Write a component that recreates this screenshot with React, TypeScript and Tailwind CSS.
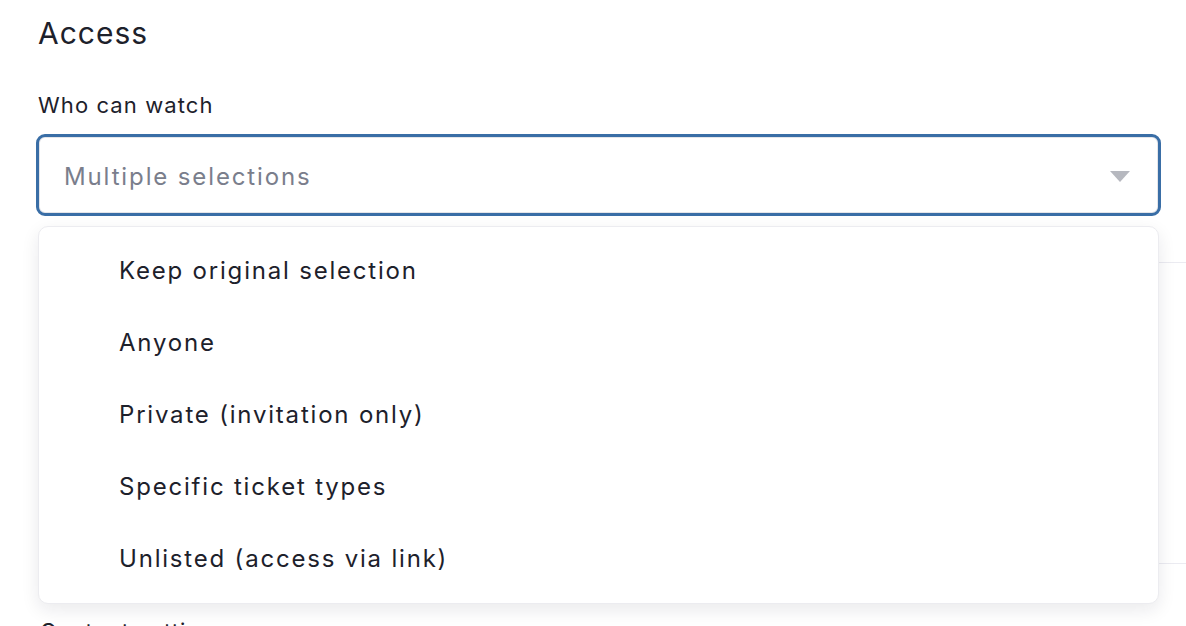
import { useState } from "react";

const OPTIONS = [
  "Keep original selection",
  "Anyone",
  "Private (invitation only)",
  "Specific ticket types",
  "Unlisted (access via link)",
];

function Caret() {
  return (
    <svg width="20" height="12" viewBox="0 0 20 12" className="shrink-0">
      <path d="M0 0 H20 L10 11 Z" fill="#b6b8bf" />
    </svg>
  );
}

export default function App() {
  const [open] = useState(true);

  return (
    <div
      className="relative h-[626px] w-[1186px] overflow-hidden bg-white text-[#1d212b]"
      style={{ fontFamily: "Inter, 'Noto Sans', sans-serif" }}
    >
      <div className="pl-[38px] pt-[15px]">
        <h2 className="text-[30px] leading-[36px] font-normal tracking-[0.033em]">Access</h2>
        <div className="mt-[40px] text-[22px] leading-[28px] tracking-[0.05em]">Who can watch</div>
      </div>

      <div className="relative ml-[36px] mt-[15px] w-[1125px]">
        <button className="flex h-[82px] w-full items-center justify-between rounded-[9px] border-[3px] border-[#3a6ea6] bg-white pl-[25px] pr-[28px] pt-[3px] shadow-[inset_0_0_0_1px_#e4e5e9]">
          <span className="text-[24px] tracking-[0.078em] text-[#7a7e8c]">Multiple selections</span>
          <Caret />
        </button>

        {open ? (
          <ul className="absolute left-[2px] top-[92px] z-10 w-[1121px] rounded-[10px] border border-[#ececf0] bg-white py-[8px] shadow-[0_6px_18px_rgba(20,20,40,0.09)]">
            {OPTIONS.map((option) => (
              <li
                key={option}
                className="flex h-[72px] items-center pl-[80px] text-[24px] tracking-[0.075em] text-[#1d212b]"
              >
                {option}
              </li>
            ))}
          </ul>
        ) : null}
      </div>

      {/* content under the open menu */}
      <div className="ml-[38px]">
        <div className="h-[47px] border-b border-[#ebebf1]" />
        <div className="h-[301px] border-b border-[#ebebf1]" />
        <div className="mt-[53px] pl-[2px] text-[22px] leading-[28px] tracking-[0.05em]">Content settings</div>
      </div>
    </div>
  );
}
